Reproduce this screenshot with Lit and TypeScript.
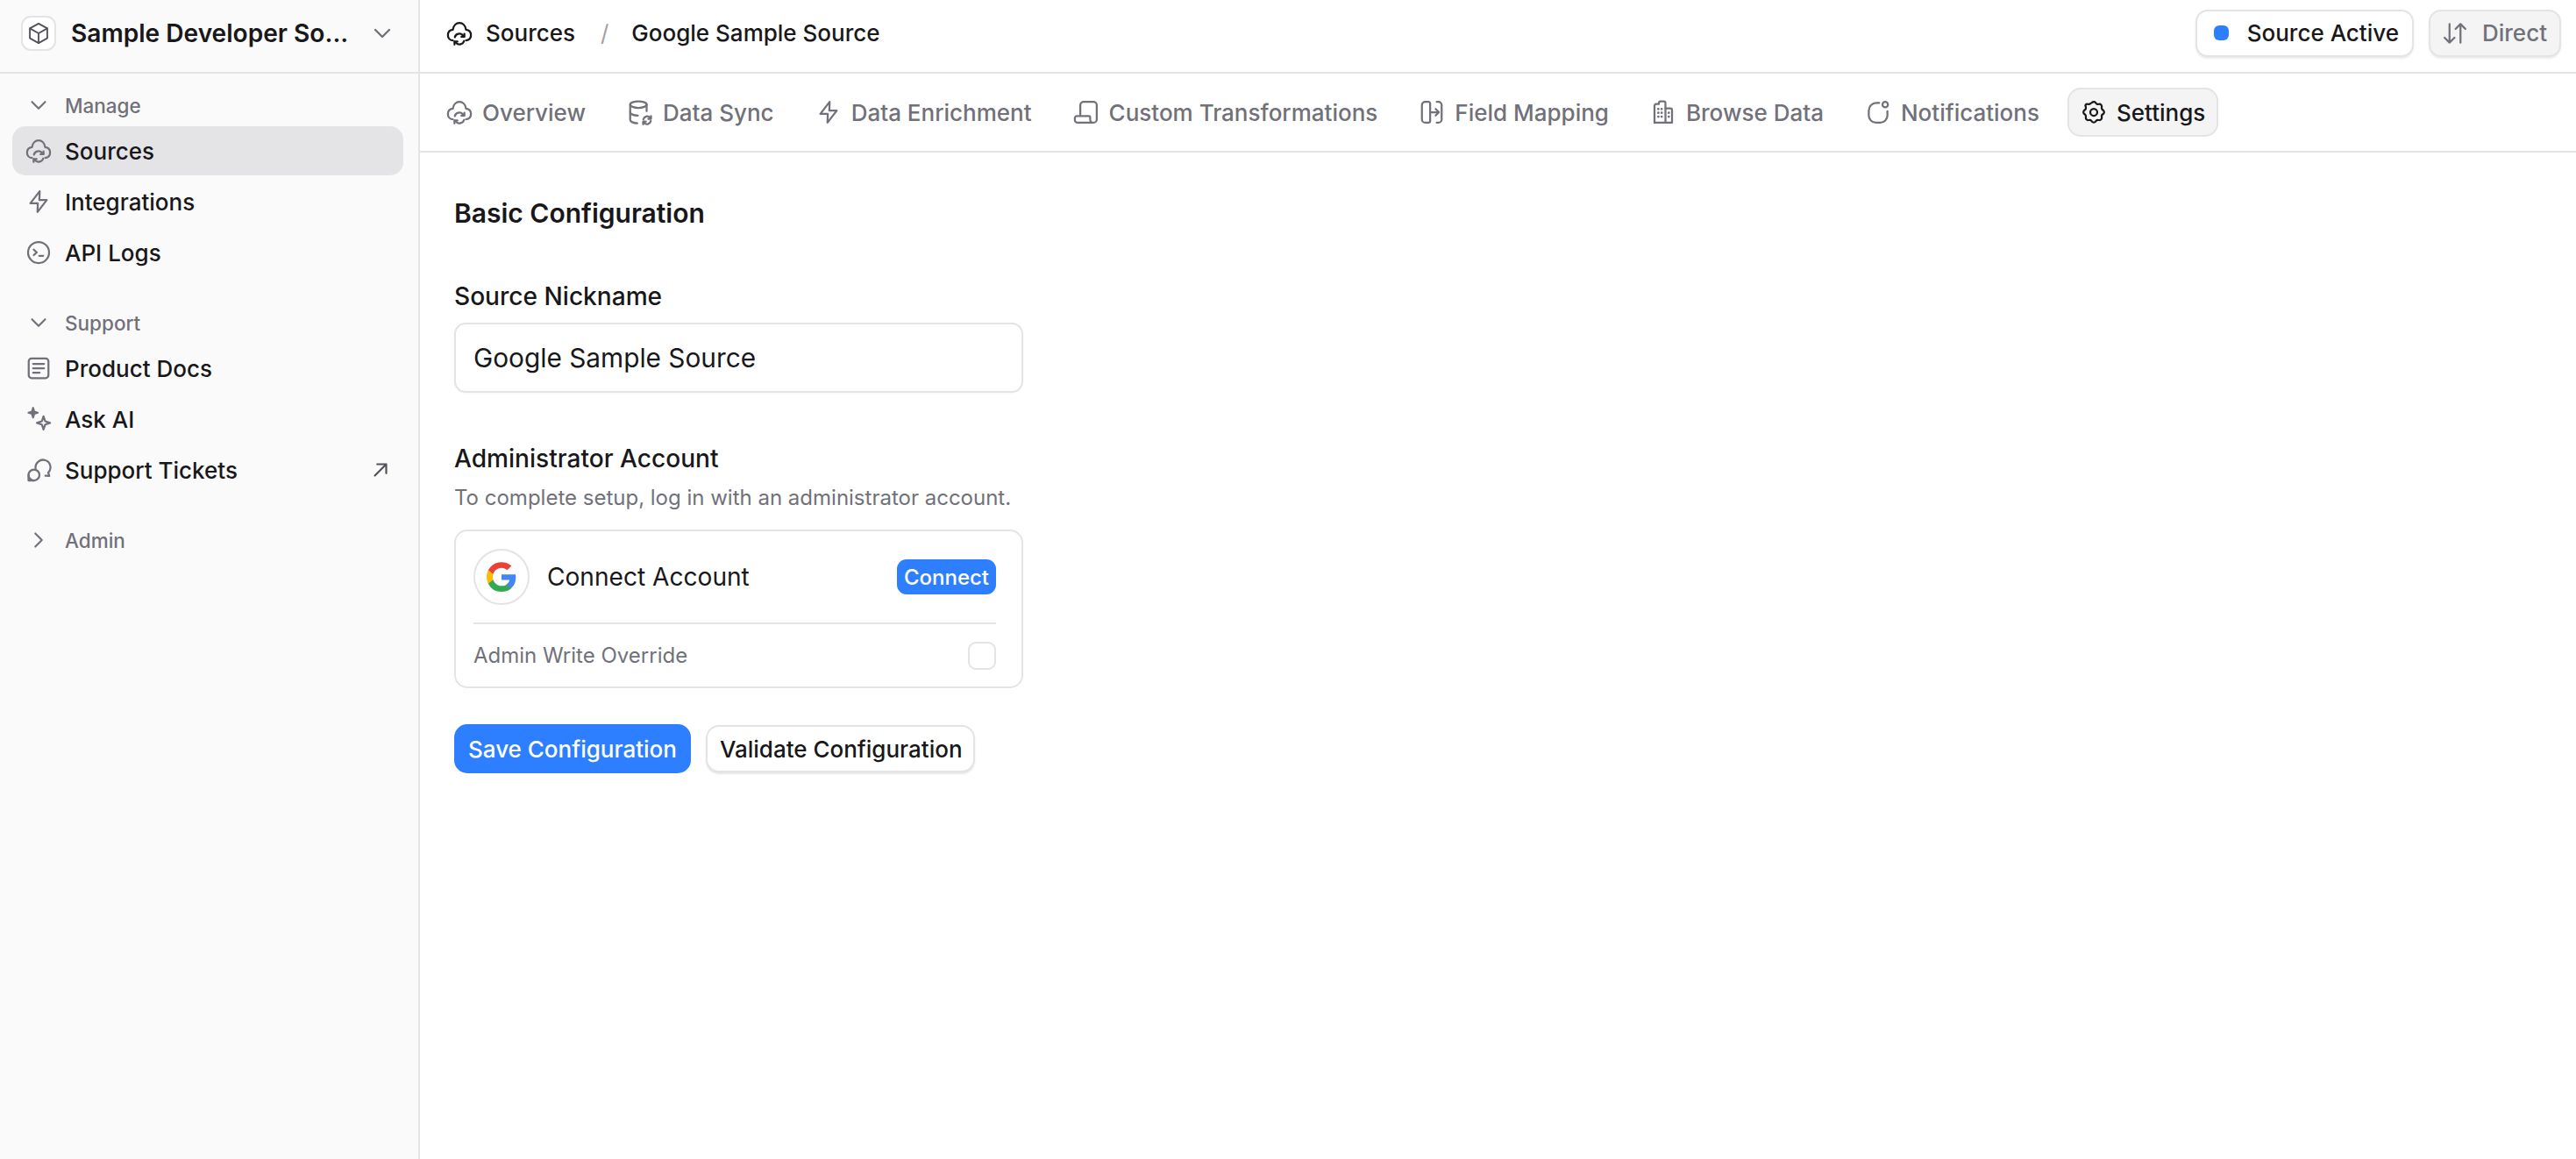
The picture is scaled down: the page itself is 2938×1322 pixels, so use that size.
import { LitElement, css, html, svg } from "lit";
import { customElement } from "lit/decorators.js";

const cloudSync = svg`<path d="M6 18.500C3 18.500 1.500 16 1.500 13.500 1.500 10.500 3.500 9 6 8.700 6.500 5 9 2.500 12 2.500s5.500 2.500 6 6.200c2.500.3 4.500 1.800 4.500 4.800 0 2.500-1.500 4.500-4.500 5"/><path d="M7.800 15.500a4.300 4.300 0 0 1 7.200-1.800l1.300 1.200"/><path d="M16.500 12.400v2.700h-2.700"/><path d="M16.200 19a4.300 4.300 0 0 1-7.200 1.800L7.700 19.600"/><path d="M7.500 22.200v-2.700h2.700"/>`;
const bolt = svg`<path d="M13 2.500 4.500 13.500h6.800L11 21.500l8.500-11h-6.800z"/>`;
const terminal = svg`<circle cx="12" cy="12" r="9.600"/><path d="m7.600 9.400 2.700 2.500-2.700 2.500"/><path d="M12.600 15h3.600"/>`;
const docs = svg`<rect x="3" y="3" width="18" height="18" rx="2.600"/><path d="M7 8h10M7 12h10M7 16h6"/>`;
const sparkles = svg`<path d="M16.500 9.500 18 14l4.500 1.500L18 17l-1.500 4.500L15 17l-4.500-1.500L15 14z"/><path d="M7 1.800 8 5.200 11.200 6.200 8 7.200 7 10.600 6 7.200 2.800 6.200 6 5.200z" fill="currentColor"/>`;
const chat = svg`<path d="M9.300 10.600A6.800 6.800 0 1 1 20.800 14.500l1 3-3.600-.2"/><circle cx="7.800" cy="16.600" r="5"/><path d="M2.800 16.600v5h5"/>`;
const dbSync = svg`<ellipse cx="10.500" cy="5" rx="7.500" ry="3"/><path d="M3 5v14c0 1.600 3 3 6.500 3"/><path d="M18 5v6"/><path d="M3 12c0 1.600 3 3 7 3"/><path d="M15 18.500a3.600 3.600 0 0 1 6-1.800l1 1M22 15.500v2.500h-2.500"/><path d="M21.800 20a3.600 3.600 0 0 1-6 1.800l-1-1M14.800 23v-2.500h2.500"/>`;
const scroll = svg`<path d="M6.500 14V5.500a3 3 0 0 1 3-3H18.500a3 3 0 0 1 3 3V18.500a3 3 0 0 1-6 0V16.500a1 1 0 0 0-1-1H3.500a2 2 0 0 0-2 2V19a2.500 2.500 0 0 0 2.500 2.500H18.500"/>`;
const fieldMap = svg`<path d="M9 2.500H6A3 3 0 0 0 3 5.500V18.500A3 3 0 0 0 6 21.500H9A1.500 1.500 0 0 0 10.500 20V4A1.500 1.500 0 0 0 9 2.500z"/><path d="M16.500 2.500h1.500A3 3 0 0 1 21 5.500V18.500A3 3 0 0 1 18 21.500H16.500"/><path d="M11 12h7M15.500 9l3 3-3 3"/>`;
const building = svg`<path d="M4 21.500V6A1.500 1.500 0 0 1 5.500 4.500H8V3.500A1.500 1.500 0 0 1 9.500 2H12.500A1.500 1.500 0 0 1 14 3.500V21.500"/><path d="M14 8.500H18.500A1.500 1.500 0 0 1 20 10V21.500H4"/><path d="M7.500 9h.01M10.500 9h.01M7.500 12.500h.01M10.500 12.500h.01M7.500 16h.01M10.500 16h.01M17 12.500h.01M17 16h.01" stroke-width="2.200"/>`;
const bell = svg`<path d="M13 3.500H10.500A7 7 0 0 0 3.500 10.500V15A6.500 6.500 0 0 0 10 21.500H14A6.500 6.500 0 0 0 20.500 15V11"/><circle cx="18.500" cy="5" r="2.500"/>`;
const gear = svg`<path d="M10.300 3.300c.9-1.100 2.500-1.100 3.400 0l.6.8c.4.500 1 .7 1.600.6l1-.1c1.400-.2 2.500 1 2.400 2.400l-.1 1c-.1.600.2 1.200.6 1.600l.8.600c1.100.9 1.100 2.500 0 3.400l-.8.600c-.5.400-.7 1-.6 1.600l.1 1c.2 1.400-1 2.500-2.400 2.400l-1-.1c-.6-.1-1.200.2-1.600.6l-.6.8c-.9 1.100-2.500 1.100-3.400 0l-.6-.8c-.4-.5-1-.7-1.600-.6l-1 .1c-1.400.2-2.500-1-2.400-2.400l.1-1c.1-.6-.2-1.200-.6-1.600l-.8-.6c-1.100-.9-1.100-2.500 0-3.400l.8-.6c.5-.4.700-1 .6-1.600l-.1-1C3.700 5.600 4.900 4.500 6.300 4.600l1 .1c.6.1 1.200-.2 1.600-.6z"/><circle cx="12" cy="12" r="3.200"/>`;
const box = svg`<path d="M12 2.500 20.500 7.200V16.800L12 21.500 3.500 16.800V7.200z"/><path d="M3.500 7.200 12 12l8.500-4.800M12 12v9.500"/>`;
const chevDown = svg`<path d="m6 9 6 6 6-6"/>`;
const chevRight = svg`<path d="m9 6 6 6-6 6"/>`;
const arrowUR = svg`<path d="M6 18 18 6M8.500 6H18v9.500"/>`;
const sort = svg`<path d="M7 3.500V20.500M2.500 16l4.500 4.500 4.500-4.500"/><path d="M17 20.500V3.500M12.500 8 17 3.500 21.500 8"/>`;

const googleG = svg`<path fill="#4285F4" d="M23.500 12.300c0-.8-.1-1.600-.2-2.300H12v4.400h6.500a5.500 5.500 0 0 1-2.400 3.600v3h3.900c2.300-2.100 3.500-5.100 3.500-8.700z"/><path fill="#34A853" d="M12 24c3.200 0 6-1.100 8-2.900l-3.900-3c-1.100.7-2.500 1.200-4.100 1.200-3.100 0-5.800-2.100-6.700-5H1.300v3.100A12 12 0 0 0 12 24z"/><path fill="#FBBC05" d="M5.300 14.300a7.200 7.200 0 0 1 0-4.600V6.600h-4a12 12 0 0 0 0 10.800z"/><path fill="#EA4335" d="M12 4.800c1.800 0 3.300.6 4.600 1.800l3.400-3.400A12 12 0 0 0 1.300 6.600l4 3.100c.9-2.800 3.600-4.900 6.700-4.900z"/>`;

const icon = (body: unknown, cls = "") => html`<svg class="ico ${cls}" viewBox="0 0 24 24">${body}</svg>`;

@customElement("app-root")
export class AppRoot extends LitElement {
  static styles = css`
    :host {
      display: block;
      height: 1322px;
      color: #18181b;
      background: #fff;
      font-family: Inter, "Liberation Sans", sans-serif;
      font-size: 26px;
      overflow: hidden;
    }
    * { box-sizing: border-box; }
    .app { display: flex; height: 100%; }
    .ico {
      width: 30px;
      height: 30px;
      flex: none;
      fill: none;
      stroke: currentColor;
      stroke-width: 1.800;
      stroke-linecap: round;
      stroke-linejoin: round;
    }
    .side {
      width: 479px;
      flex: none;
      background: #fafafa;
      border-right: 2px solid #e4e4e7;
    }
    .org {
      height: 84px;
      padding: 0 25px 6px 24px;
      display: flex;
      align-items: center;
      border-bottom: 2px solid #e4e4e7;
    }
    .org-logo {
      width: 40px;
      height: 40px;
      border: 2px solid #e4e4e7;
      border-radius: 11px;
      background: #fff;
      color: #52525b;
      display: grid;
      place-items: center;
      margin-right: 17px;
      flex: none;
    }
    .org-logo .ico { width: 28px; height: 28px; stroke-width: 1.600; }
    .org-name { flex: 1; font-size: 28.100px; font-weight: 600; white-space: nowrap; }
    .org > .ico { width: 32px; height: 32px; color: #71717a; }
    nav { padding: 17px 17px 0 14px; display: flex; flex-direction: column; }
    .group {
      height: 38px;
      display: flex;
      align-items: center;
      gap: 15px;
      padding-left: 15px;
      color: #71717a;
      font-size: 22.500px;
      font-weight: 500;
      margin-bottom: 5px;
    }
    .group .ico { stroke-width: 1.700; }
    .group.next { margin-top: 31px; }
    .group.admin { margin-top: 31px; }
    .item {
      height: 56px;
      margin-bottom: 2px;
      display: flex;
      align-items: center;
      gap: 15px;
      padding: 0 13px 0 15px;
      border-radius: 15px;
      font-weight: 500;
    }
    .item > .ico:first-child { color: #71717a; }
    .item.on { background: #e4e4e7; }
    .item span { flex: 1; }
    .item .ext { width: 26px; height: 26px; color: #52525b; stroke-width: 2; }
    .main { flex: 1; min-width: 0; display: flex; flex-direction: column; }
    .top {
      height: 84px;
      flex: none;
      display: flex;
      align-items: center;
      padding: 0 17px 7px 30px;
      border-bottom: 2px solid #e4e4e7;
      font-weight: 500;
    }
    .crumbs { flex: 1; display: flex; align-items: center; }
    .crumbs .ico { margin-right: 15px; }
    .slash { color: #a1a1aa; margin: 0 26px 0 29px; font-weight: 400; }
    .chip {
      height: 54px;
      display: flex;
      align-items: center;
      border: 2px solid #e4e4e7;
      border-radius: 14px;
      box-shadow: 0 2px 2px rgba(0, 0, 0, 0.08);
      padding: 0 15px;
      background: #fff;
    }
    .chip.go { margin-left: 17px; background: #f4f4f5; color: #71717a; padding: 0 14px 0 13px; gap: 16px; }
    .dot { width: 17px; height: 17px; border-radius: 6px; background: #2e7fff; margin: 0 21px 0 4px; }
    .tabs {
      height: 90px;
      flex: none;
      display: flex;
      align-items: center;
      gap: 17px;
      padding: 0 15px;
      border-bottom: 2px solid #e4e4e7;
    }
    .tab {
      height: 56px;
      display: flex;
      align-items: center;
      gap: 11px;
      padding: 0 13px;
      color: #71717a;
      font-weight: 500;
      border: 2px solid transparent;
      border-radius: 15px;
      white-space: nowrap;
    }
    .tab.on { background: #f4f4f5; border-color: #e4e4e7; color: #18181b; }
    .body { padding: 50px 0 0 39px; width: 688px; }
    h1 { margin: 0; font-size: 30px; line-height: 38px; font-weight: 600; }
    .label { font-size: 28.100px; line-height: 38px; font-weight: 500; }
    .label.first { margin-top: 57px; }
    .label.second { margin-top: 56px; }
    .input {
      margin-top: 11px;
      height: 80px;
      border: 2px solid #e4e4e7;
      border-radius: 13px;
      display: flex;
      align-items: center;
      padding-left: 20px;
      font-size: 29.800px;
      box-shadow: 0 1px 2px rgba(0, 0, 0, 0.03);
    }
    .hint { margin-top: 8px; color: #71717a; font-size: 24px; line-height: 36px; white-space: nowrap; }
    .card {
      margin-top: 18px;
      height: 181px;
      border: 2px solid #e4e4e7;
      border-radius: 15px;
      padding: 20px 29px 0 20px;
    }
    .conn {
      display: flex;
      align-items: center;
      height: 64px;
      font-size: 28.100px;
    }
    .gcirc {
      width: 64px;
      height: 64px;
      border: 2px solid #e4e4e7;
      border-radius: 50%;
      display: grid;
      place-items: center;
      margin-right: 20px;
      flex: none;
    }
    .gcirc svg { width: 34px; height: 34px; }
    .conn span { flex: 1; }
    .mini {
      height: 40px;
      padding: 0 8px;
      display: flex;
      align-items: center;
      background: #2e7fff;
      color: #fff;
      border-radius: 11px;
      font-size: 24px;
      font-weight: 500;
    }
    .rule { margin-top: 20px; border-top: 2px solid #e4e4e7; }
    .opt {
      height: 71px;
      display: flex;
      align-items: center;
      justify-content: space-between;
      color: #71717a;
      font-size: 24px;
    }
    .check {
      width: 32px;
      height: 32px;
      border: 2px solid #e4e4e7;
      border-radius: 9px;
      background: #fff;
    }
    .actions { margin-top: 41px; display: flex; gap: 17px; align-items: center; }
    .btn {
      height: 56px;
      padding: 0 16px;
      display: flex;
      align-items: center;
      border-radius: 15px;
      font-weight: 500;
      white-space: nowrap;
    }
    .btn.primary { background: #2e7fff; color: #fff; }
    .btn.plain {
      height: 54px;
      padding: 0 12px 0 14px;
      border: 2px solid #e4e4e7;
      box-shadow: 0 2px 2px rgba(0, 0, 0, 0.1);
      background: #fff;
    }
  `;

  render() {
    const tabs: [unknown, string, boolean][] = [
      [cloudSync, "Overview", false],
      [dbSync, "Data Sync", false],
      [bolt, "Data Enrichment", false],
      [scroll, "Custom Transformations", false],
      [fieldMap, "Field Mapping", false],
      [building, "Browse Data", false],
      [bell, "Notifications", false],
      [gear, "Settings", true],
    ];
    return html`
      <div class="app">
        <aside class="side">
          <div class="org">
            <div class="org-logo">${icon(box)}</div>
            <div class="org-name">Sample Developer So...</div>
            ${icon(chevDown)}
          </div>
          <nav>
            <div class="group">${icon(chevDown)}Manage</div>
            <div class="item on">${icon(cloudSync)}<span>Sources</span></div>
            <div class="item">${icon(bolt)}<span>Integrations</span></div>
            <div class="item">${icon(terminal)}<span>API Logs</span></div>
            <div class="group next">${icon(chevDown)}Support</div>
            <div class="item">${icon(docs)}<span>Product Docs</span></div>
            <div class="item">${icon(sparkles)}<span>Ask AI</span></div>
            <div class="item">${icon(chat)}<span>Support Tickets</span>${icon(arrowUR, "ext")}</div>
            <div class="group admin">${icon(chevRight)}Admin</div>
          </nav>
        </aside>
        <div class="main">
          <header class="top">
            <div class="crumbs">
              ${icon(cloudSync)}<span>Sources</span>
              <span class="slash">/</span>
              <span>Google Sample Source</span>
            </div>
            <div class="chip"><i class="dot"></i>Source Active</div>
            <div class="chip go">${icon(sort)}Direct</div>
          </header>
          <div class="tabs">
            ${tabs.map(
              ([ic, label, on]) => html`<div class="tab ${on ? "on" : ""}">${icon(ic)}${label}</div>`
            )}
          </div>
          <section class="body">
            <h1>Basic Configuration</h1>
            <div class="label first">Source Nickname</div>
            <div class="input">Google Sample Source</div>
            <div class="label second">Administrator Account</div>
            <div class="hint">To complete setup, log in with an administrator account.</div>
            <div class="card">
              <div class="conn">
                <div class="gcirc"><svg viewBox="0 0 24 24">${googleG}</svg></div>
                <span>Connect Account</span>
                <div class="mini">Connect</div>
              </div>
              <div class="rule"></div>
              <div class="opt">Admin Write Override<i class="check"></i></div>
            </div>
            <div class="actions">
              <div class="btn primary">Save Configuration</div>
              <div class="btn plain">Validate Configuration</div>
            </div>
          </section>
        </div>
      </div>
    `;
  }
}
